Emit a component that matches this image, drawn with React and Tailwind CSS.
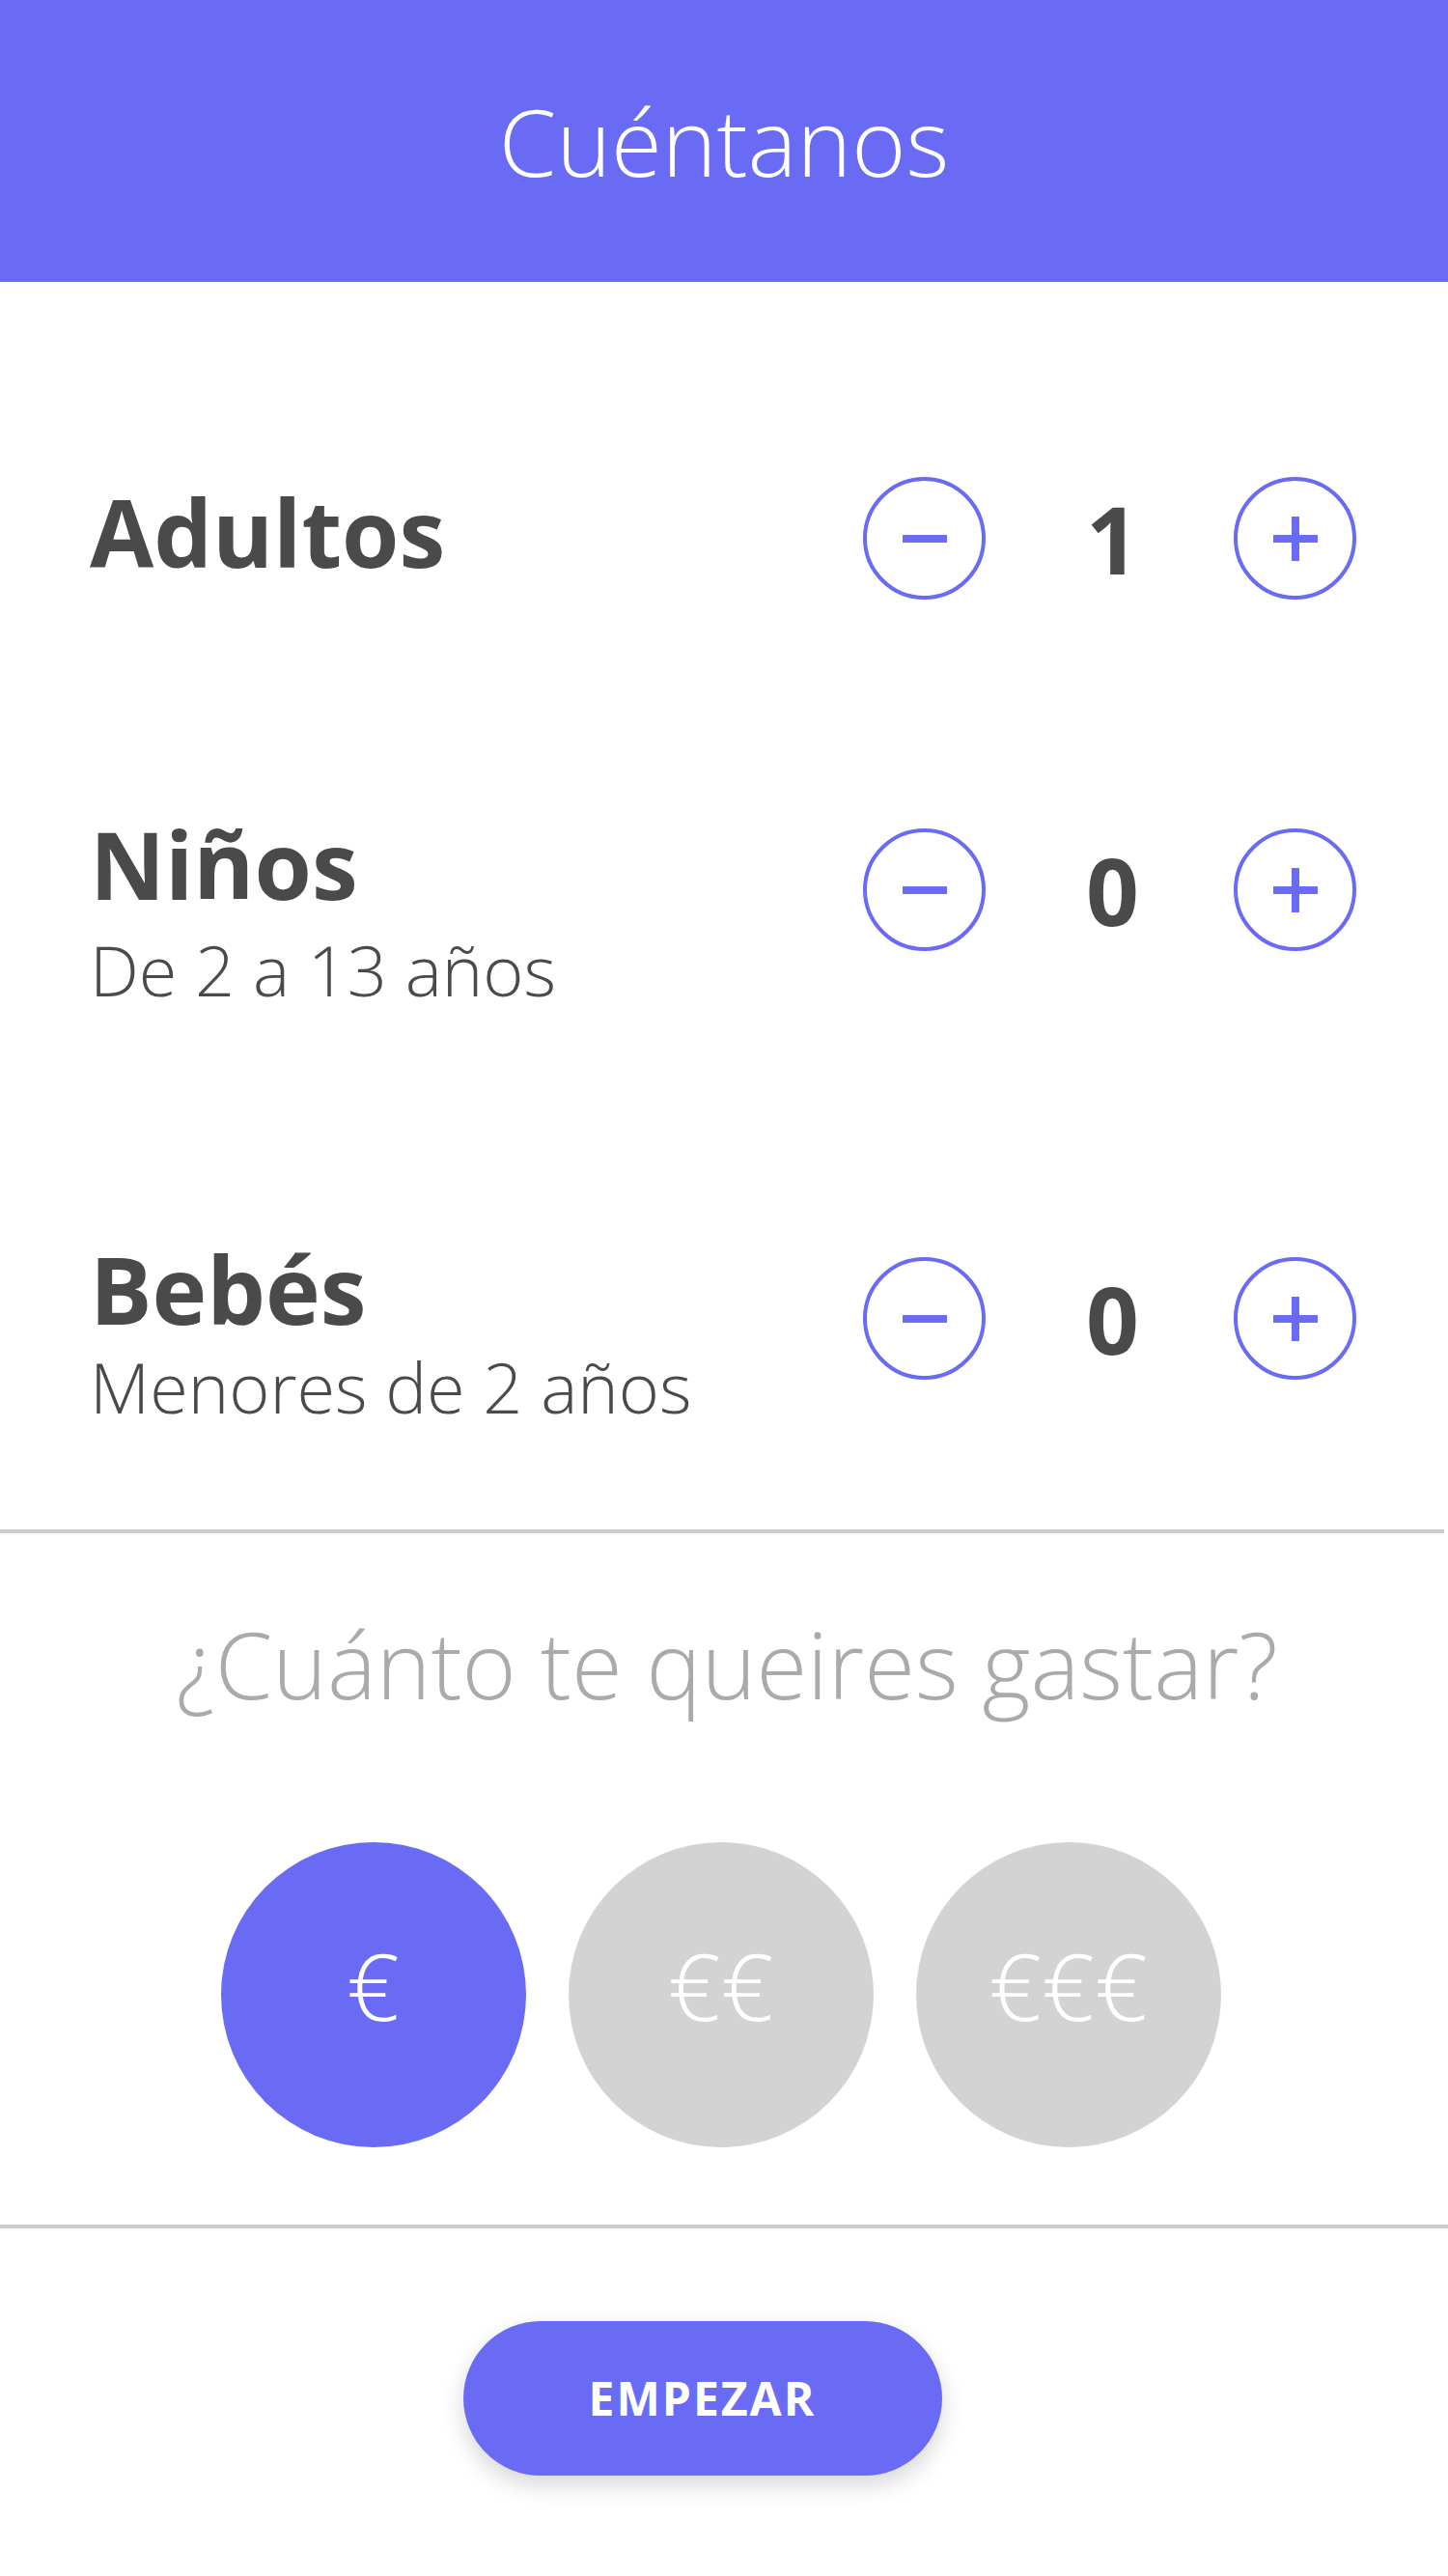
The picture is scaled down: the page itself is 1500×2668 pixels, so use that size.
import React, { useState } from "react";

const BLUE = "#6a6bf4";

const Minus = () => (
  <svg width="46" height="46" viewBox="0 0 46 46">
    <rect x="0" y="19" width="46" height="8" fill={BLUE} />
  </svg>
);

const Plus = () => (
  <svg width="46" height="46" viewBox="0 0 46 46">
    <rect x="0" y="19" width="46" height="8" fill={BLUE} />
    <rect x="19" y="0" width="8" height="46" fill={BLUE} />
  </svg>
);

const Counter = ({ value, onChange, className }) => (
  <div className={"flex items-center " + className}>
    <button onClick={() => onChange(Math.max(0, value - 1))}
      className="w-[127px] h-[127px] rounded-full border-[4px] border-[#6a6bf4] flex items-center justify-center bg-white">
      <Minus />
    </button>
    <div className="w-[257px] pl-[6px] text-center text-[96px] font-bold leading-none text-[#4a4a4a]">{value}</div>
    <button onClick={() => onChange(value + 1)}
      className="w-[127px] h-[127px] rounded-full border-[4px] border-[#6a6bf4] flex items-center justify-center bg-white">
      <Plus />
    </button>
  </div>
);

const App = () => {
  const [adults, setAdults] = useState(1);
  const [kids, setKids] = useState(0);
  const [babies, setBabies] = useState(0);
  const [budget, setBudget] = useState(0);

  return (
    <div className="w-[1500px] min-h-[2668px] bg-white" style={{ fontFamily: '"Open Sans", "Noto Sans", sans-serif' }}>
      <header className="h-[292px] bg-[#6a6bf4] flex items-center justify-center">
        <h1 className="text-[96px] font-light leading-none text-white">Cuéntanos</h1>
      </header>

      <section className="pl-[93px] pr-[95px]">
        <div className="flex justify-between items-start mt-[201px]">
          <div className="text-[96px] font-bold leading-[115px] text-[#4a4a4a]">Adultos</div>
          <Counter value={adults} onChange={setAdults} className="mt-[1px]" />
        </div>

        <div className="flex justify-between items-start mt-[216px]">
          <div className="text-[#4a4a4a]">
            <div className="text-[96px] font-bold leading-[115px]">Niños</div>
            <div className="text-[72px] font-light leading-[86px] mt-[9px]">De 2 a 13 años</div>
          </div>
          <Counter value={kids} onChange={setKids} className="mt-[21px]" />
        </div>

        <div className="flex justify-between items-start mt-[230px]">
          <div className="text-[#4a4a4a]">
            <div className="text-[96px] font-bold leading-[115px]">Bebés</div>
            <div className="text-[72px] font-light leading-[86px] mt-[1px]">Menores de 2 años</div>
          </div>
          <Counter value={babies} onChange={setBabies} className="mt-[25px]" />
        </div>
      </section>

      <div className="w-[1496px] h-[4px] bg-[#cccccc] mt-[105px]" />

      <h2 className="mt-[77px] pl-[6px] text-center text-[96px] font-light leading-[115px] text-[#aaaaaa]">¿Cuánto te queires gastar?</h2>

      <div className="mt-[128px] flex justify-center gap-[44px] pr-[7px]">
        {["€", "€€", "€€€"].map((label, i) => (
          <button key={label} onClick={() => setBudget(i)}
            className={"w-[316px] h-[316px] rounded-full flex items-center justify-center pb-[20px] text-[96px] font-light leading-none text-white " +
              (budget === i ? "bg-[#6a6bf4]" : "bg-[#d3d3d3]")}>
            {label}
          </button>
        ))}
      </div>

      <div className="w-full h-[4px] bg-[#cccccc] mt-[80px]" />

      <div className="mt-[96px] flex justify-center pr-[45px]">
        <button className="w-[496px] h-[160px] rounded-full bg-[#6a6bf4] text-white text-[48px] font-bold tracking-[2px] shadow-[0_10px_24px_rgba(0,0,0,0.16)]">
          EMPEZAR
        </button>
      </div>
    </div>
  );
};

export default App;
